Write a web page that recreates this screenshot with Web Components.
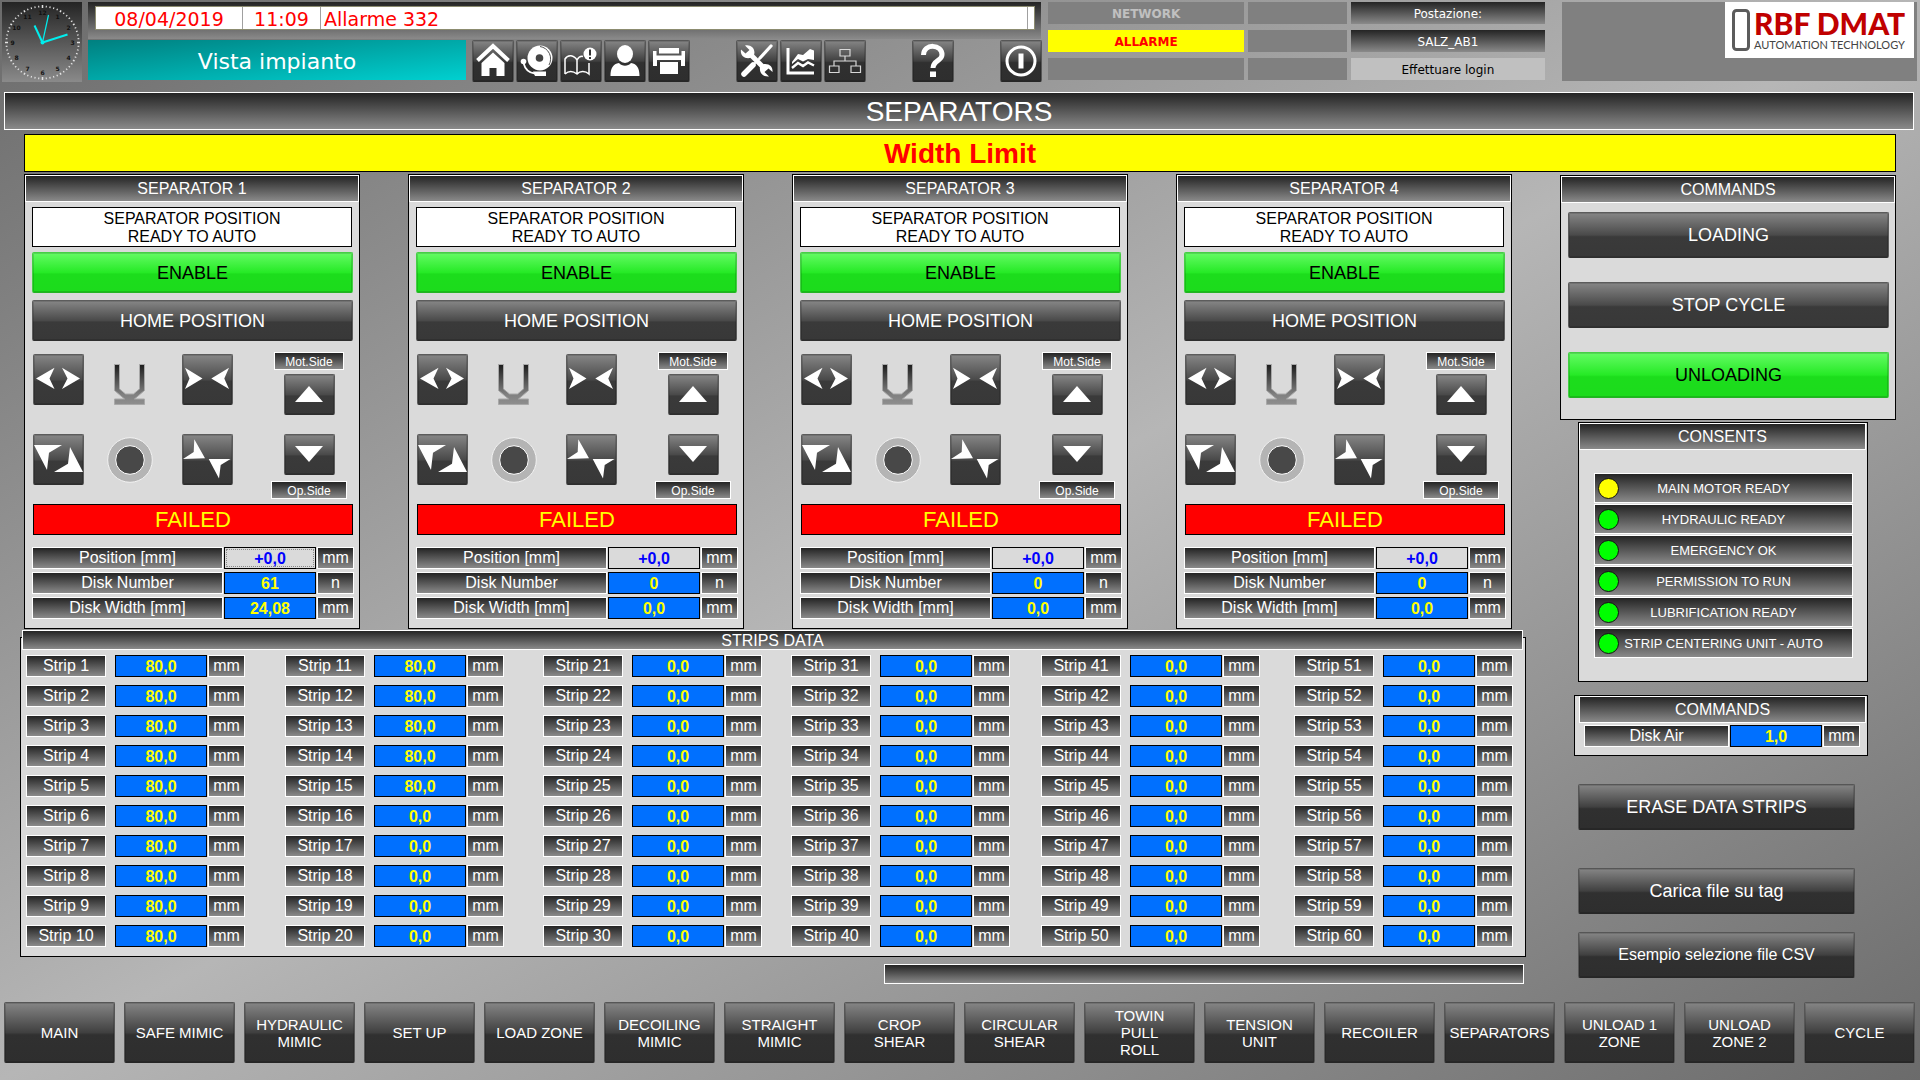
<!DOCTYPE html>
<html lang="it">
<head>
<meta charset="utf-8">
<title>Separators</title>
<style>
  body {
    margin: 0;
    font-family: "Liberation Sans", Arial, sans-serif;
    font-size: 16px;
    background: #6b6b6b;
  }
</style>
</head>
<body>
<hmi-app></hmi-app>

<script>
const STEEL = 'linear-gradient(#242424, #8a8a8a)';

function define(name, html, setup) {
  const tpl = document.createElement('template');
  tpl.innerHTML = '<style>*{box-sizing:border-box}:host{display:block;box-sizing:border-box}:host([hidden]){display:none}</style>' + html;
  customElements.define(name, class extends HTMLElement {
    constructor() {
      super();
      this.attachShadow({ mode: 'open' }).appendChild(tpl.content.cloneNode(true));
    }
    connectedCallback() {
      if (this.ready) return;
      this.ready = true;
      if (setup) setup(this, this.shadowRoot);
    }
  });
}

/* Steel coloured caption with a white frame */
define('hmi-caption', `
<style>
  :host { display: flex; align-items: center; justify-content: center; border: 1px solid #fff; padding-top: 1px;
    background: ${STEEL}; color: #fff; text-align: center; white-space: nowrap; }
</style><slot></slot>`);

/* Glossy push button; tone="green" marks the active state */
define('hmi-button', `
<style>
  :host { height: var(--h, 46px); }
  button { display: flex; align-items: center; justify-content: center; width: 100%; height: 100%;
    margin: 0; padding: 0; border: 1px solid #5c5c5c; border-bottom-color: #2e2e2e; border-radius: 2px;
    background: linear-gradient(#868686, #4a4a4a 50%, #3a3a3a 54%, #383838);
    box-shadow: inset 0 0 0 1px rgba(0,0,0,.14);
    color: #fff; font: inherit; line-height: var(--lh, 20px); text-align: center; cursor: pointer; }
  :host([tone="green"]) button { color: #000; border-color: #45cf45; border-bottom-color: #22b422;
    background: linear-gradient(#64fb64, #26ea26 50%, #1cdd1c 54%, #1cdb1c); }
  :host([tone="dark"]) button { border-color: #565656; border-bottom-color: #262626;
    background: linear-gradient(#858585, #404040 50%, #303030 54%, #2e2e2e); }
  ::slotted(svg) { display: block; }
</style>
<button type="button"><slot></slot></button>`, (el, root) => {
  const label = el.getAttribute('label');
  if (label) root.querySelector('button').setAttribute('aria-label', label);
});

/* Label + value + unit */
define('hmi-field', `
<style>
  :host { display: flex; height: 22px; gap: 1px; font-size: 16px; }
  label, span { border: 1px solid #fff; background: ${STEEL}; color: #fff; line-height: 20px;
    text-align: center; white-space: nowrap; }
  label { flex: 1 1 0; margin-right: var(--label-gap, 0); }
  span { flex: 0 0 37px; }
  input { flex: 0 0 92px; width: 92px; min-width: 0; margin: 0; padding: 2px 0 0; border: 1px solid #000; border-radius: 0;
    background: #0070ff; color: #ff0; font: inherit; font-weight: bold; text-align: center; outline: 0; }
  input[readonly] { background: #dadada; color: #00f; }
  :host([current]) input { outline: 1px dotted #888; outline-offset: -3px; }
</style>
<label for="v"></label><input id="v" type="text"><span></span>`, (el, root) => {
  root.querySelector('label').textContent = el.getAttribute('name');
  root.querySelector('span').textContent = el.getAttribute('unit');
  const input = root.querySelector('input');
  input.value = el.getAttribute('value');
  if (el.hasAttribute('readonly')) input.readOnly = true;
});

/* Light framed panel with a caption */
define('hmi-panel', `
<style>
  :host { border: 1px solid #000; background: #dadada; }
  hmi-caption { height: 27px; padding-top: 0; font-size: 16px; margin: 0 var(--cap-r, 0) 0 var(--cap-l, 0); }
</style>
<hmi-caption></hmi-caption><slot></slot>`, (el, root) => {
  root.querySelector('hmi-caption').textContent = el.getAttribute('title-text');
});

const shape = (h, d) => `<svg width="49" height="${h - 2}" viewBox="1 1 49 ${h - 2}"><path fill="#fff" d="${d}"/></svg>`;

define('hmi-separator', `
<style>
  .body { display: flex; flex-direction: column; padding: 5px 6px 9px 7px; }
  .state { border: 1px solid #000; background: #fff; color: #000; text-align: center; line-height: 18px; padding: 2px 0 0; height: 40px; margin-right: 1px; }
  hmi-button { --h: 41px; font-size: 18px; }
  .enable { margin-top: 5px; }
  .home { margin-top: 7px; }
  .pad { display: flex; justify-content: space-between; margin-top: 11px; padding: 0 6px 0 1px; }
  .moves { display: grid; grid-template-columns: 74px 75px 51px; grid-template-rows: 51px 51px; row-gap: 29px; padding-top: 2px; }
  .moves hmi-button { width: 51px; --h: 51px; }
  .moves svg.u { align-self: end; margin-left: 7px; }
  .moves svg.o { align-self: center; }
  .side { display: flex; flex-direction: column; align-items: center; width: 76px; }
  .side hmi-caption { font-size: 12px; height: 18px; width: 70px; }
  .side hmi-caption.op { width: 76px; margin-top: 6px; }
  .side hmi-button { width: 51px; }
  .up { margin-top: 4px; }
  .down { margin-top: 19px; }
  .alarm { margin: 5px 0 12px 1px; height: 31px; border: 1px solid #000; background: #f00; color: #ff0;
    font-size: 22px; line-height: 29px; text-align: center; }
  .rows { display: grid; row-gap: 3px; margin-right: -1px; }
</style>
<hmi-panel>
  <div class="body">
    <div class="state">SEPARATOR POSITION<br>READY TO AUTO</div>
    <hmi-button class="enable" tone="green">ENABLE</hmi-button>
    <hmi-button class="home">HOME POSITION</hmi-button>
    <div class="pad">
      <div class="moves">
        <hmi-button label="Open">${shape(51, 'M3 24.500L21.500 13.700L16.500 24.500L21.500 35zM29 13.700L47 24.500L29 35L34.500 24.500z')}</hmi-button>
        <svg class="u" width="31" height="41" viewBox="0 0 31 41"><defs><linearGradient id="g" x1="0" y1="0" x2="0" y2="1"><stop offset="0" stop-color="#1c1c1c"/><stop offset=".75" stop-color="#808080"/><stop offset="1" stop-color="#8e8e8e"/></linearGradient></defs><path d="M.5.5h5v24.500l6 5h8l6-5V.5h5v26l-10 8.500H30.500v5.500H.5V35H10.500L.5 26.500z" fill="url(#g)" stroke="#a8a8a8"/></svg>
        <hmi-button label="Close">${shape(51, 'M3 13.700L20.500 24.500L3 35L7.500 24.500zM47 13.700L29.300 24.500L47 35L42.300 24.500z')}</hmi-button>
        <hmi-button label="Rotate out">${shape(51, 'M1 11H29L16 18.700L14 36zM37 13L50 38H21L35 29.700z')}</hmi-button>
        <svg class="o" width="46" height="46" viewBox="0 0 46 46"><circle cx="23" cy="23" r="22.300" fill="#b4b4b4" stroke="#f2f2f2"/><circle cx="23" cy="23" r="14.300" fill="#484848" stroke="#fff"/></svg>
        <hmi-button label="Rotate in">${shape(51, 'M12.300 5.300L23 24.300L1 25L11.700 18zM26.700 25H48.500L38.700 31L37 44.500z')}</hmi-button>
      </div>
      <div class="side">
        <hmi-caption>Mot.Side</hmi-caption>
        <hmi-button class="up" label="Up">${shape(41, 'M25 12L39 28H11z')}</hmi-button>
        <hmi-button class="down" label="Down">${shape(41, 'M11 12H39L25 28z')}</hmi-button>
        <hmi-caption class="op">Op.Side</hmi-caption>
      </div>
    </div>
    <div class="alarm">FAILED</div>
    <div class="rows"></div>
  </div>
</hmi-panel>`, (el, root) => {
  const n = el.getAttribute('number');
  root.querySelector('hmi-panel').setAttribute('title-text', 'SEPARATOR ' + n);
  root.querySelector('hmi-panel').shadowRoot.querySelector('hmi-caption').textContent = 'SEPARATOR ' + n;
  root.querySelector('.rows').innerHTML =
    `<hmi-field name="Position [mm]" value="+0,0" unit="mm" readonly ${n === '1' ? 'current' : ''}></hmi-field>
     <hmi-field name="Disk Number" value="${el.getAttribute('disks')}" unit="n"></hmi-field>
     <hmi-field name="Disk Width [mm]" value="${el.getAttribute('disk-width')}" unit="mm"></hmi-field>`;
});

define('hmi-strips', `
<style>
  hmi-caption { position: relative; height: 20px; font-size: 16px; margin: 0 3px 0 2px; }
  .body { margin-top: -13px; padding: 17px 12px 9px 5px; border: 1px solid #000; background: #dadada;
    display: grid; grid-template-columns: 259fr 258fr 248fr 250fr 253fr 219px; }
  .col { display: grid; row-gap: 8px; width: 219px; --label-gap: 8px; }
</style>
<hmi-caption>STRIPS DATA</hmi-caption>
<div class="body"></div>`, (el, root) => {
  let html = '';
  for (let c = 0; c < 6; c++) {
    html += '<div class="col">';
    for (let r = 1; r <= 10; r++) {
      const n = c * 10 + r;
      html += `<hmi-field name="Strip ${n}" value="${n <= 15 ? '80,0' : '0,0'}" unit="mm"></hmi-field>`;
    }
    html += '</div>';
  }
  root.querySelector('.body').innerHTML = html;
});

define('hmi-consent', `
<style>
  :host { display: grid; grid-template-columns: 21px 1fr 21px; align-items: center; height: 30px; padding: 0 3px; border: 1px solid #fff;
    background: ${STEEL}; color: #fff; font-size: 13px; text-align: center; white-space: nowrap; }
  i { width: 21px; height: 21px; border: 1px solid #111; border-radius: 50%; background: #0f0; }
  :host([state="warn"]) i { background: #ff0; }
</style><i></i><span><slot></slot></span>`);

define('hmi-clock', `
<style>:host { width: 80px; height: 80px; background: ${STEEL}; } svg { display: block; }</style>
<svg width="80" height="80" viewBox="-40.500 -40.500 80 80" font-family="DejaVu Sans, sans-serif" font-size="6" font-weight="bold" text-anchor="middle"></svg>`, (el, root) => {
  let s = '';
  for (let i = 0; i < 60; i++) {
    const big = i % 15 === 0;
    s += `<path d="M0-${big ? 37.500 : 37}V-${big ? 34.500 : 35.200}" stroke="#e4e4e4" stroke-width="${i % 5 ? 1.100 : 1.500}" transform="rotate(${i * 6})"/>`;
  }
  for (let h = 1; h <= 12; h++) {
    const a = h * Math.PI / 6;
    s += `<text x="${(30 * Math.sin(a)).toFixed(1)}" y="${(2.200 - 30 * Math.cos(a)).toFixed(1)}" fill="#111">${h}</text>`;
  }
  s += '<g stroke="#0ee" fill="none"><path d="M0 0L-8-17" stroke-width="2"/><path d="M0 0L25-8" stroke-width="2"/><path d="M0 0L6-27.500" stroke-width="1.200"/></g><circle r="2" fill="#0ee"/>';
  root.querySelector('svg').innerHTML = s;
});

const ICONS = {
  home: ['Home', '<path d="M5.500 20.500L21 6L36.500 20.500" stroke="#fff" stroke-width="4" fill="none"/><path fill="#fff" d="M21 12.500L9.500 23V36H17.500V28H24.500V36H32.500V23z"/>'],
  bell: ['Alarms', '<ellipse cx="24" cy="18" rx="12.500" ry="12.500" fill="#fff"/><path d="M24 6.500A12.500 12.500 0 0 1 33 25" stroke="#555" fill="none"/><circle cx="23.500" cy="18" r="3.800" fill="#444"/><circle cx="7.500" cy="21.500" r="2.800" fill="#fff"/><path d="M7.500 23C9 29 13 33 19 33.500" stroke="#fff" stroke-width="1.800" fill="none"/><path fill="#fff" d="M17 31.500h13v4.500H19z"/>'],
  book: ['Alarm log', '<path d="M5 34V19C8 14 14 15 17 20C19 16.500 21 16 23 16.500M17 20V34M5 34C9 30.500 13 31 17 34C20 31 25 30.500 29 34V23" stroke="#fff" stroke-width="1.500" fill="none"/><circle cx="30" cy="14" r="6.500" fill="#fff"/><path d="M30 9.500V15.500M30 17V19" stroke="#333" stroke-width="2"/>'],
  user: ['User', '<ellipse cx="21" cy="14" rx="8" ry="9" fill="#fff"/><path fill="#fff" d="M6.500 36C6.500 28 9 24 15 23C18 26.500 24 26.500 27 23C33 24 35.500 28 35.500 36z"/>'],
  print: ['Print', '<path fill="#fff" d="M11 8H31V13.500H11zM5 11H8.500V15.500H33.500V11H37V26H33V20H9V26H5zM12 22H30V34H12z"/>'],
  tools: ['Tools', '<path d="M35 6L24 18" stroke="#fff" stroke-width="3.200" stroke-linecap="round"/><path d="M17 25L8 34" stroke="#fff" stroke-width="5.500" stroke-linecap="round"/><path d="M26 16L15 27" stroke="#fff" stroke-width="2"/><path d="M13.500 13.500L29 29" stroke="#fff" stroke-width="5"/><path fill="#fff" d="M9 5.500C15 4 20 9 18 15L14 18C8 19 4 15 5 9.500L9.500 13.500L13.500 10zM33 36.500C27 37 23 33 24 27L28 24C34 23.500 37 27 36.500 32L32.500 28.500L28.500 32z"/>'],
  chart: ['Trends', '<path d="M8 8V33H34" stroke="#fff" stroke-width="3" fill="none"/><path fill="#fff" d="M12 22L18 14L23 15L30 9L34 10.500V20L28 19L23 21.500L18 19L12 24z"/><path d="M12 28L18 23L23 26L28 22.500L34 25.500" stroke="#fff" stroke-width="2.400" fill="none"/>'],
  net: ['Network map', '<path d="M16 9.500H26V16H16zM5.500 26H15V32.500H5.500zM27 26H36.500V32.500H27zM21 16V21M10 26V21H32V26" stroke="#d8d8d8" stroke-width="1.200" fill="none"/>'],
  help: ['Help', '<path d="M11.500 15C11.500 3 30.500 4 30 15C29.700 21 21 20.500 21 28" stroke="#fff" stroke-width="5" fill="none"/><path fill="#fff" d="M18 31.500H24V37H18z"/>'],
  power: ['Exit', '<circle cx="21" cy="21" r="14" stroke="#fff" stroke-width="3" fill="none"/><path fill="#fff" d="M18.500 13.500H23.500V28.500H18.500z"/>']
};
const iconBtn = k => `<hmi-button tone="dark" label="${ICONS[k][0]}"><svg width="40" height="40" viewBox="1 1 40 40">${ICONS[k][1]}</svg></hmi-button>`;

define('hmi-header', `
<style>
  :host { display: flex; height: 92px; padding: 2px 3px 0 2px; font-family: "DejaVu Sans", Verdana, sans-serif; }
  .center { flex: 0 0 954px; margin-left: 6px; display: flex; flex-direction: column; }
  .alarmbar { height: 37px; padding: 4px 6px 9px 7px; background: ${STEEL}; margin-right: 1px; }
  .line { display: flex; height: 24px; background: #fff; border: 1px solid #8c8c70; color: #f00; font-size: 19px; line-height: 25px; }
  .line span { border-right: 1px solid #a0a0a0; }
  .date { width: 147px; text-align: center; }
  .time { width: 78px; text-align: center; }
  .msg { flex: 1; padding-left: 3px; margin-right: 6px; }
  .tools { display: flex; gap: 2px; margin-top: -1px; padding-top: 2px; }
  .place { width: 378px; height: 40px; margin: 0 4px 0 0; background: linear-gradient(to bottom right, #008080, #00d0d0);
    color: #fff; font-size: 22px; line-height: 44px; text-align: center; }
  .tools hmi-button { width: 42px; --h: 42px; }
  .gap { width: 42px; }
  .status { flex: 1 1 0; margin-left: 6px; display: grid; grid-template-columns: 197fr 99fr 195fr; grid-template-rows: 22px 22px 22px; gap: 6px 4px; }
  .status div { background: #808080; font-size: 12px; line-height: 24px; height: 22px; text-align: center; }
  .status .net { color: #c0c0c0; font-weight: bold; }
  .status .alm { color: #f00; background: #ff0; font-weight: bold; }
  .status .st { color: #fff; background: ${STEEL}; }
  .status .login { color: #000; background: #c0c0c0; }
  .brand { flex: 0 0 355px; height: 79px; margin-left: 17px; background: #808080; display: flex; justify-content: flex-end; padding-right: 3px; }
  .logo { display: flex; width: 189px; height: 56px; padding: 7px 0 0 7px; background: #fff; font-family: Lato, sans-serif; white-space: nowrap; }
  .logo svg { flex: none; margin-right: 4px; }
  .logo b { display: block; color: #c00000; font-size: 30px; line-height: 28px; font-weight: 900; }
  .logo span { display: block; color: #444; font-size: 11px; line-height: 16px; }
</style>
<hmi-clock></hmi-clock>
<div class="center">
  <div class="alarmbar"><div class="line"><span class="date">08/04/2019</span><span class="time">11:09</span><span class="msg">Allarme 332</span></div></div>
  <div class="tools"><div class="place">Vista impianto</div>
    ${['home', 'bell', 'book', 'user', 'print'].map(iconBtn).join('')}<div class="gap"></div>
    ${['tools', 'chart', 'net'].map(iconBtn).join('')}<div class="gap"></div>
    ${iconBtn('help')}<div class="gap"></div>${iconBtn('power')}
  </div>
</div>
<div class="status">
  <div class="net">NETWORK</div><div></div><div class="st">Postazione:</div>
  <div class="alm">ALLARME</div><div></div><div class="st">SALZ_AB1</div>
  <div></div><div></div><div class="login">Effettuare login</div>
</div>
<div class="brand"><div class="logo">
  <svg width="18" height="42" viewBox="0 0 18 42"><rect x="1.500" y="1.500" width="15" height="39" rx="3" fill="#fff" stroke="#5c5c5c" stroke-width="3"/></svg>
  <div><b>RBF DMAT</b><span>AUTOMATION TECHNOLOGY</span></div>
</div></div>`);

define('hmi-nav', `
<style>
  nav { display: grid; grid-template-columns: repeat(16, minmax(0, 1fr)); gap: 9px; padding: 0 5px 17px 4px; }
  hmi-button { --h: 61px; --lh: 17px; font-size: 15px; }
</style><nav></nav>`, (el, root) => {
  root.querySelector('nav').innerHTML = ['MAIN', 'SAFE MIMIC', 'HYDRAULIC<br>MIMIC', 'SET UP', 'LOAD ZONE', 'DECOILING<br>MIMIC',
    'STRAIGHT<br>MIMIC', 'CROP<br>SHEAR', 'CIRCULAR<br>SHEAR', 'TOWIN<br>PULL<br>ROLL', 'TENSION<br>UNIT', 'RECOILER',
    'SEPARATORS', 'UNLOAD 1<br>ZONE', 'UNLOAD<br>ZONE 2', 'CYCLE']
    .map(t => `<hmi-button tone="dark"><span>${t}</span></hmi-button>`).join('');
});

define('hmi-app', `
<style>
  :host { display: flex; flex-direction: column; min-height: 100vh;
    background: linear-gradient(to bottom right, #6b6b6b, #b6b6b6 50%, #6b6b6b); }
  .title { height: 38px; margin: 0 6px 0 4px; font-size: 28px; }
  .limit { height: 38px; margin: 4px 24px 2px; border: 1px solid #000; background: #ff0; color: #f00;
    font-size: 28px; font-weight: bold; line-height: 37px; text-align: center; }
  main { display: flex; gap: 34px; padding: 0 24px 18px 20px; }
  .left { flex: 1; display: flex; flex-direction: column; }
  .seps { display: flex; gap: 48px; padding: 0 14px 1px 4px; }
  .seps > * { flex: 1 1 0; }
  .bar { width: 640px; height: 20px; margin: 7px 2px 0 auto; }
  .right { flex: 0 0 336px; padding-top: 1px; display: flex; flex-direction: column; }
  .cmd { display: grid; row-gap: 24px; padding: 9px 6px 21px 7px; font-size: 18px; }
  .consents { margin: 2px 28px 13px 18px; --cap-r: 1px; }
  .consents div { display: grid; row-gap: 1px; padding: 23px 14px 23px 15px; }
  .air { margin: 0 28px 28px 14px; --cap-l: 4px; --cap-r: 1px; }
  .air hmi-field { margin: 2px 7px 8px 9px; }
  .acts { display: grid; margin: 0 41px 0 18px; font-size: 18px; }
  .load { margin: 38px 0 18px; }
  .csv { font-size: 16px; }
  hmi-nav { margin-top: auto; }
</style>
<hmi-header></hmi-header>
<hmi-caption class="title">SEPARATORS</hmi-caption>
<div class="limit">Width Limit</div>
<main>
  <div class="left">
    <div class="seps">
      <hmi-separator number="1" disks="61" disk-width="24,08"></hmi-separator>
      <hmi-separator number="2" disks="0" disk-width="0,0"></hmi-separator>
      <hmi-separator number="3" disks="0" disk-width="0,0"></hmi-separator>
      <hmi-separator number="4" disks="0" disk-width="0,0"></hmi-separator>
    </div>
    <hmi-strips></hmi-strips>
    <hmi-caption class="bar"></hmi-caption>
  </div>
  <div class="right">
    <hmi-panel title-text="COMMANDS"><div class="cmd">
      <hmi-button>LOADING</hmi-button><hmi-button>STOP CYCLE</hmi-button><hmi-button tone="green">UNLOADING</hmi-button>
    </div></hmi-panel>
    <hmi-panel class="consents" title-text="CONSENTS"><div>
      <hmi-consent state="warn">MAIN MOTOR READY</hmi-consent>
      <hmi-consent>HYDRAULIC READY</hmi-consent>
      <hmi-consent>EMERGENCY OK</hmi-consent>
      <hmi-consent>PERMISSION TO RUN</hmi-consent>
      <hmi-consent>LUBRIFICATION READY</hmi-consent>
      <hmi-consent>STRIP CENTERING UNIT - AUTO</hmi-consent>
    </div></hmi-panel>
    <hmi-panel class="air" title-text="COMMANDS"><hmi-field name="Disk Air" value="1,0" unit="mm"></hmi-field></hmi-panel>
    <div class="acts">
      <hmi-button tone="dark">ERASE DATA STRIPS</hmi-button>
      <hmi-button tone="dark" class="load">Carica file su tag</hmi-button>
      <hmi-button tone="dark" class="csv">Esempio selezione file CSV</hmi-button>
    </div>
  </div>
</main>
<hmi-nav></hmi-nav>`);
</script>
</body>
</html>
